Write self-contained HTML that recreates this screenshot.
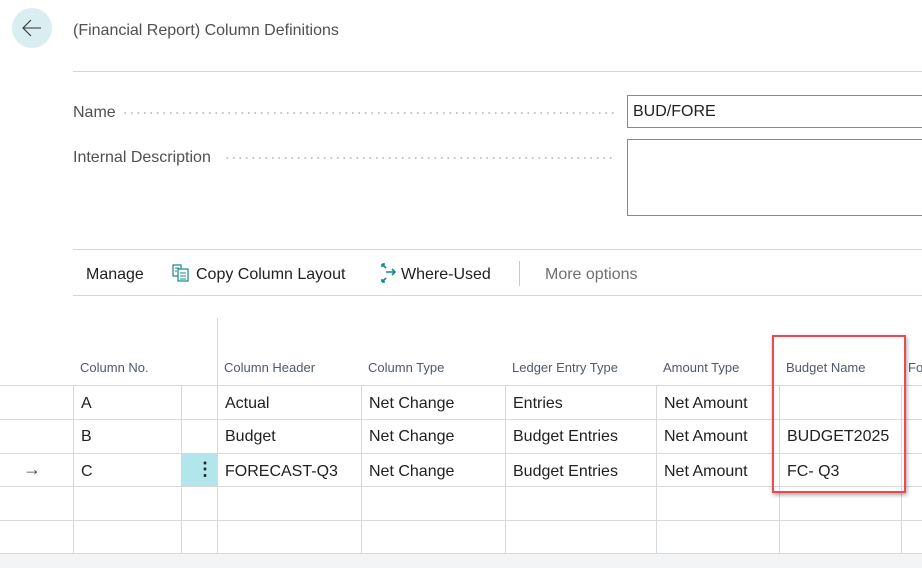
<!DOCTYPE html>
<html><head><style>
*{margin:0;padding:0;box-sizing:border-box}
body{width:922px;height:568px;overflow:hidden;background:#fff;font-family:"Liberation Sans",sans-serif;color:#212121;position:relative}
.a{position:absolute;white-space:nowrap}
.hl{position:absolute;height:1px;background:#d6d6d6}
.vl{position:absolute;width:1px;background:#d6d8dc}
.gh{position:absolute;height:1px;background:#d6d8dc;left:0;width:922px}
.th{font-size:13px;color:#505a6a;top:360px}
.td{font-size:16px;color:#212121}
.dots{position:absolute;height:2px;background-image:radial-gradient(circle,#c4c4c4 0.9px,transparent 1.1px);background-size:6.5px 2px}
</style></head><body>
<div class="a" style="left:12px;top:8px;width:40px;height:40px;border-radius:50%;background:#d8eef1"></div>
<svg class="a" style="left:21px;top:18px" width="22" height="20" viewBox="0 0 22 20"><path d="M20 10H2M10 2L2 10L10 18" fill="none" stroke="#333" stroke-width="1.1"/></svg>
<div class="a" style="left:73px;top:22px;font-size:16px;color:#505050">(Financial Report) Column Definitions</div>
<div class="hl" style="left:73px;top:71px;width:849px"></div>
<div class="a" style="left:73px;top:104px;font-size:16px;color:#505050">Name</div>
<div class="dots" style="left:122px;top:112px;width:492px"></div>
<div class="a" style="left:73px;top:149px;font-size:16px;color:#505050">Internal Description</div>
<div class="dots" style="left:224px;top:157px;width:390px"></div>
<div class="a" style="left:627px;top:95px;width:300px;height:33px;border:1px solid #8a8a8a"></div>
<div class="a" style="left:633px;top:103px;font-size:16px">BUD/FORE</div>
<div class="a" style="left:627px;top:139px;width:300px;height:77px;border:1px solid #8a8a8a"></div>
<div class="hl" style="left:73px;top:249px;width:849px"></div>
<div class="hl" style="left:73px;top:295px;width:849px"></div>
<div class="a" style="left:86px;top:266px;font-size:16px">Manage</div>
<svg class="a" style="left:172px;top:264px" width="18" height="18" viewBox="0 0 18 18"><rect x="1" y="1" width="8" height="11" fill="none" stroke="#138a8a" stroke-width="1.2"/><rect x="6" y="5" width="10" height="12" fill="#fff" stroke="#138a8a" stroke-width="1.2"/><path d="M8 9h6M8 12h6M8 15h6M3 4h4M3 7h2" stroke="#138a8a"/></svg>
<div class="a" style="left:196px;top:266px;font-size:16px">Copy Column Layout</div>
<svg class="a" style="left:379px;top:263px" width="18" height="20" viewBox="0 0 18 20"><path d="M3 1l3 0M3 1v3M3 1l4 4M7 9h9M13 6l3 3-3 3M3 19h3M3 19v-3M3 19l4-4" fill="none" stroke="#138a8a" stroke-width="1.6"/></svg>
<div class="a" style="left:401px;top:266px;font-size:16px">Where-Used</div>
<div class="vl" style="left:519px;top:261px;height:25px;background:#c8c8c8"></div>
<div class="a" style="left:545px;top:266px;font-size:16px;color:#707070">More options</div>

<div class="vl" style="left:217px;top:318px;height:236px"></div>
<div class="gh" style="top:385px"></div><div class="gh" style="top:419px"></div><div class="gh" style="top:453px"></div><div class="gh" style="top:486px"></div><div class="gh" style="top:520px"></div>
<div class="a" style="left:0;top:553px;width:922px;height:15px;background:#f3f4f5;border-top:1px solid #d6d8dc"></div>
<div class="vl" style="left:73px;top:385px;height:168px"></div>
<div class="vl" style="left:181px;top:385px;height:168px"></div>
<div class="vl" style="left:361px;top:385px;height:168px"></div>
<div class="vl" style="left:505px;top:385px;height:168px"></div>
<div class="vl" style="left:656px;top:385px;height:168px"></div>
<div class="vl" style="left:779px;top:385px;height:168px"></div>
<div class="vl" style="left:901px;top:385px;height:168px"></div>
<div class="a" style="left:182px;top:454px;width:35px;height:32px;background:#b3e6ea"></div>
<div class="a" style="left:196px;top:459px;font-size:18px;font-weight:bold;line-height:20px">⋮</div>
<div class="a th" style="left:80px">Column No.</div>
<div class="a th" style="left:224px">Column Header</div>
<div class="a th" style="left:368px">Column Type</div>
<div class="a th" style="left:512px">Ledger Entry Type</div>
<div class="a th" style="left:663px">Amount Type</div>
<div class="a th" style="left:786px">Budget Name</div>
<div class="a th" style="left:908px">Fo</div>

<div class="a td" style="left:81px;top:395px">A</div>
<div class="a td" style="left:225px;top:395px">Actual</div>
<div class="a td" style="left:369px;top:395px">Net Change</div>
<div class="a td" style="left:513px;top:395px">Entries</div>
<div class="a td" style="left:664px;top:395px">Net Amount</div>
<div class="a td" style="left:81px;top:428px">B</div>
<div class="a td" style="left:225px;top:428px">Budget</div>
<div class="a td" style="left:369px;top:428px">Net Change</div>
<div class="a td" style="left:513px;top:428px">Budget Entries</div>
<div class="a td" style="left:664px;top:428px">Net Amount</div>
<div class="a td" style="left:787px;top:428px">BUDGET2025</div>
<div class="a" style="left:23px;top:459px;font-size:18px;color:#444">→</div>
<div class="a td" style="left:81px;top:463px">C</div>
<div class="a td" style="left:225px;top:463px">FORECAST-Q3</div>
<div class="a td" style="left:369px;top:463px">Net Change</div>
<div class="a td" style="left:513px;top:463px">Budget Entries</div>
<div class="a td" style="left:664px;top:463px">Net Amount</div>
<div class="a td" style="left:787px;top:463px">FC- Q3</div>
<div class="a" style="left:772px;top:335px;width:134px;height:158px;border:2px solid #ec4a4f;box-shadow:1px 2px 4px rgba(0,0,0,.35)"></div>
</body></html>
